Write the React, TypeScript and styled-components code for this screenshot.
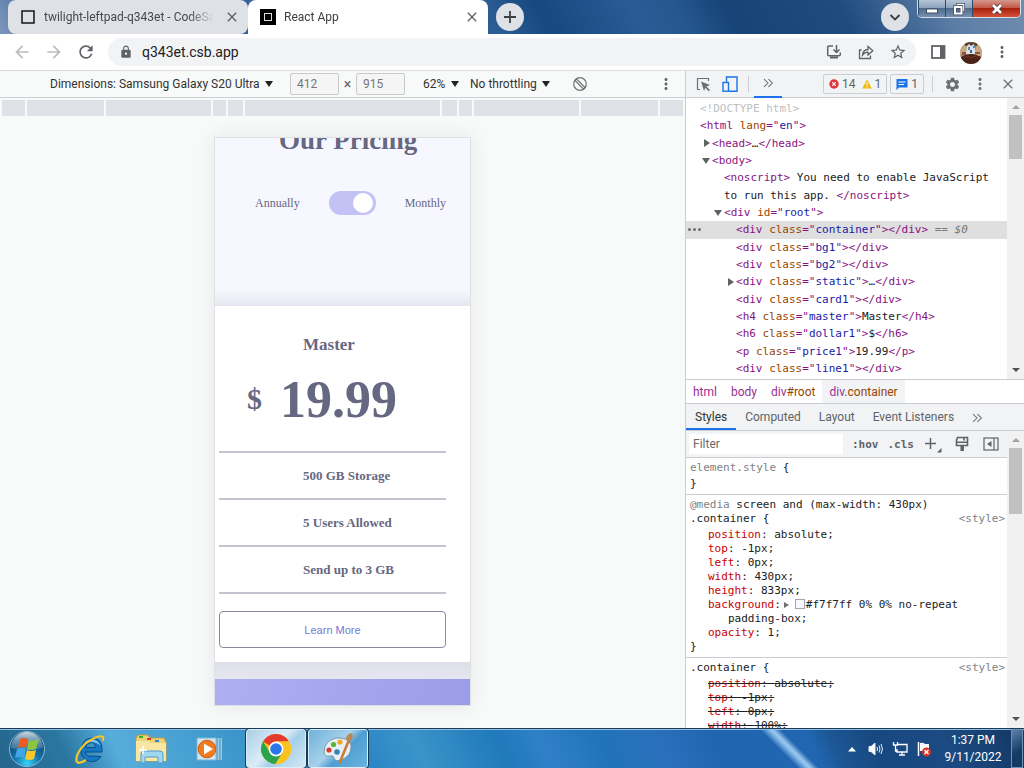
import React from "react";
import styled, { createGlobalStyle, css } from "styled-components";
import {
  MdArrowBack,
  MdArrowForward,
  MdClose,
  MdLock,
  MdMoreVert,
  MdRefresh,
  MdSettings,
  MdStarBorder,
} from "react-icons/md";

const ui = `Roboto, "Open Sans", sans-serif`;
const mono = `"DejaVu Sans Mono", "Liberation Mono", monospace`;
const serif = `"Liberation Serif", "Times New Roman", serif`;

const GlobalStyle = createGlobalStyle`
  *, *::before, *::after { box-sizing: border-box; }
  body { margin: 0; font-family: ${ui}; font-size: 12px; color: #333; }
  button, input, select { font: inherit; color: inherit; margin: 0; }
  button { padding: 0; border: 0; background: none; }
  h1, h2, ul, p { margin: 0; padding: 0; }
  ul { list-style: none; }
  a { color: inherit; text-decoration: none; }
`;

const Desktop = styled.div`
  display: flex;
  flex-direction: column;
  height: 100vh;
  overflow: hidden;
`;

/* ---------- Browser frame ---------- */

const TitleBar = styled.header`
  display: flex;
  flex: none;
  height: 34px;
  padding: 0 3px 0 8px;
  background: linear-gradient(
    62deg,
    #7d97bb 0%,
    #3b699f 6%,
    #2b5c94 48%,
    #184880 53%,
    #2b5b94 62%,
    #265890 66%,
    #174377 71%,
    #1f4b7f 82%,
    #5b7da6 92%,
    #6f8dae 100%
  );
`;

const Tab = styled.div<{ $active?: boolean }>`
  display: flex;
  align-items: center;
  gap: 8px;
  flex: 0 1 240px;
  min-width: 0;
  padding: 0 6px 0 12px;
  border-radius: ${(p) => (p.$active ? "8px 8px 0 0" : "8px")};
  background: ${(p) => (p.$active ? "#fff" : "#dee1e6")};
  color: ${(p) => (p.$active ? "#3c4043" : "#45494d")};
`;

const TabTitle = styled.span`
  flex: 1;
  overflow: hidden;
  white-space: nowrap;
  mask-image: linear-gradient(90deg, #000 85%, transparent);
`;

const RoundButton = styled.button<{ $push?: boolean }>`
  display: grid;
  place-items: center;
  flex: none;
  width: 28px;
  height: 28px;
  margin: 3px 0 0 ${(p) => (p.$push ? "auto" : "8px")};
  border-radius: 50%;
  background: #dee1e6;
  color: #3c4043;
`;

const WindowControls = styled.div`
  display: flex;
  flex: none;
  height: 18px;
  margin-left: 8px;
  border: 1px solid #d5dfeb;
  border-top: 0;
  border-radius: 0 0 5px 5px;
  overflow: hidden;
`;

const WindowButton = styled.button<{ $close?: boolean }>`
  display: grid;
  place-items: center;
  width: ${(p) => (p.$close ? "48px" : "27px")};
  border-left: 1px solid #2f4969;
  background: ${(p) =>
    p.$close
      ? "linear-gradient(#d5988c 0%, #c45a48 45%, #a9220c 50%, #d4513a 100%)"
      : "linear-gradient(#b6c5d6 0%, #8da4bf 45%, #4e6b8f 50%, #7791b0 100%)"};
`;

const NavBar = styled.nav`
  display: flex;
  align-items: center;
  flex: none;
  height: 37px;
  padding: 0 12px;
  gap: 12px;
  border-bottom: 1px solid #d9dbde;
  background: #fff;
`;

const IconButton = styled.button<{ $muted?: boolean }>`
  display: grid;
  place-items: center;
  flex: none;
  width: 20px;
  height: 20px;
  color: ${(p) => (p.$muted ? "#babcbe" : "#5f6368")};
`;

const AddressBar = styled.div`
  display: flex;
  align-items: center;
  flex: 1;
  height: 28px;
  gap: 12px;
  padding: 0 8px 0 11px;
  border-radius: 14px;
  background: #f1f3f4;
  color: #5f6368;
`;

const AddressInput = styled.input`
  flex: 1;
  min-width: 0;
  margin-left: -3px;
  padding: 0;
  border: 0;
  outline: 0;
  background: none;
  font-size: 14px;
  color: #202124;
`;

const Content = styled.main`
  display: flex;
  flex: 1;
  min-height: 0;
`;

/* ---------- Device preview ---------- */

const Preview = styled.section`
  display: flex;
  flex-direction: column;
  flex: 1;
  min-width: 0;
  background: #f8f9f9;
`;

const DeviceBar = styled.div`
  display: flex;
  align-items: center;
  flex: none;
  height: 27px;
  padding: 0 9px 0 50px;
  border-bottom: 1px solid #cacdd1;
`;

const ViewOptions = styled.div`
  display: flex;
  align-items: center;
  margin: 0 auto 0 18px;
`;

const DropDown = styled.label<{ $gap: number }>`
  display: flex;
  align-items: center;
  gap: 5px;
  margin-right: ${(p) => p.$gap}px;
  &::after {
    content: "";
    border: 4px solid transparent;
    border-top: 6px solid #222;
    border-bottom: 0;
  }
`;

const Select = styled.select`
  appearance: none;
  padding: 0;
  border: 0;
  background: none;
  outline: 0;
`;

const SizeInput = styled.input`
  width: 49px;
  height: 22px;
  padding: 0 6px;
  border: 1px solid #c8cacc;
  border-radius: 2px;
  background: #f5f5f5;
  color: #757575;
`;

const Times = styled.span`
  width: 17px;
  font-size: 14px;
  text-align: center;
  color: #666;
`;

const Spacer = styled.span`
  flex: 1;
`;

const Ruler = styled.div`
  display: grid;
  grid-template-columns: 23fr 77fr 105fr 13fr 15fr 195fr 15fr 13fr 105fr 77fr 23fr;
  gap: 2px;
  flex: none;
  height: 16px;
  margin: 2px;
`;

const RulerStep = styled.i`
  background: #dee1e6;
`;

const Stage = styled.div`
  flex: 1;
  display: flex;
  justify-content: center;
  align-items: flex-start;
  padding-top: 19px;
  overflow: hidden;
`;

const Phone = styled.article`
  display: flex;
  flex-direction: column;
  width: 257px;
  border: 1px solid #dfe0e4;
  box-shadow: 0 0 20px rgba(0, 0, 0, 0.08);
  overflow: hidden;
  font-family: ${serif};
  color: #666780;
`;

const Hero = styled.div`
  height: 168px;
  background: linear-gradient(#f7f7ff 90%, #e6e6f0);
`;

const PageTitle = styled.h1`
  display: flex;
  align-items: flex-end;
  height: 18px;
  padding-left: 64px;
  font-size: 27px;
  line-height: 32px;
  white-space: nowrap;
`;

const Billing = styled.label`
  display: flex;
  align-items: center;
  justify-content: space-between;
  margin-top: 35px;
  padding: 0 24px 0 40px;
`;

const Switch = styled.input`
  appearance: none;
  width: 47px;
  height: 24px;
  padding: 2px;
  border-radius: 12px;
  background: #c2c2f4;
  &::before {
    content: "";
    display: block;
    width: 20px;
    height: 20px;
    margin-left: 22px;
    border-radius: 50%;
    background: #fff;
  }
`;

const PlanCard = styled.section`
  height: 356px;
  padding: 27px 24px 0 4px;
  background: #fff;
`;

const PlanName = styled.h2`
  padding-left: 84px;
  font-size: 17px;
  line-height: 24px;
`;

const Price = styled.p`
  display: flex;
  align-items: center;
  gap: 18px;
  height: 94px;
  padding: 0 0 10px 28px;
  font-size: 52px;
  font-weight: bold;
`;

const Currency = styled.span`
  font-size: 30px;
`;

const Features = styled.ul`
  border-top: 2px solid #c4c4ce;
`;

const Feature = styled.li`
  height: 47px;
  padding-left: 84px;
  border-bottom: 2px solid #c4c4ce;
  font-size: 13px;
  font-weight: bold;
  line-height: 46px;
`;

const LearnMore = styled.button`
  width: 100%;
  height: 37px;
  margin-top: 17px;
  border: 1px solid #8a8a9e;
  border-radius: 4px;
  font-family: "Liberation Sans", Arial, sans-serif;
  font-size: 11px;
  color: #7577d8;
`;

const CardShade = styled.div`
  height: 17px;
  background: linear-gradient(#dfdfe9, #e6e6f1);
`;

const NextCard = styled.div`
  height: 26px;
  background: linear-gradient(100deg, #aeaff2, #9a9ce8);
`;

/* ---------- Developer tools ---------- */

const DevTools = styled.aside`
  display: flex;
  flex-direction: column;
  flex: none;
  width: 339px;
  border-left: 1px solid #cacdd1;
  background: #fff;
`;

const ToolBar = styled.div`
  display: flex;
  align-items: center;
  flex: none;
  height: 27px;
  padding: 0 3px;
  border-bottom: 1px solid #cacdd1;
  background: #f1f3f4;
`;

const ToolButton = styled.button<{ $wide?: boolean; $active?: boolean }>`
  display: grid;
  place-items: center;
  width: ${(p) => (p.$wide ? "28px" : "27px")};
  height: 27px;
  color: #6e7073;
  ${(p) =>
    p.$active &&
    css`
      border-bottom: 2px solid #1a73e8;
    `}
`;

const Divider = styled.i`
  width: 1px;
  height: 16px;
  margin: 0 5px;
  background: #cacdd1;
`;

const Counter = styled.button`
  display: flex;
  align-items: center;
  gap: 3px;
  height: 20px;
  margin-right: 3px;
  padding: 0 5px;
  border: 1px solid #cacdd1;
  border-radius: 2px;
  color: #5f6368;
`;

const Pane = styled.div<{ $grow?: boolean }>`
  display: flex;
  flex: ${(p) => (p.$grow ? "1 1 0" : "0 0 281px")};
  min-height: 0;
`;

const PaneBody = styled.div`
  flex: 1;
  min-width: 0;
  overflow: hidden;
  font-family: ${mono};
  font-size: 11px;
  color: #202124;
`;

const Tree = styled.ul`
  display: grid;
  grid-template-rows: repeat(16, 1fr);
  height: 100%;
  padding: 2px 0;
`;

const TreeRow = styled.li<{ $depth: number; $selected?: boolean }>`
  display: flex;
  align-items: center;
  padding-left: ${(p) => 2 + p.$depth * 12}px;
  background: ${(p) => (p.$selected ? "#dfdfdf" : "none")};
  white-space: pre;
`;

const Twisty = styled.span<{ $state?: "open" | "closed" }>`
  display: flex;
  justify-content: flex-end;
  width: 12px;
  padding-right: 2px;
  &::before {
    content: "";
    border: 4px solid transparent;
    ${(p) => p.$state === "open" && "border-top: 6px solid #5f6368; border-bottom: 0;"}
    ${(p) =>
      p.$state === "closed" && "border-left: 6px solid #5f6368; border-right: 0;"}
  }
`;

const RowDots = styled.span`
  display: flex;
  gap: 2px;
  width: 48px;
`;

const RowDot = styled.i`
  width: 3px;
  height: 3px;
  border-radius: 50%;
  background: #6e6e6e;
`;

const TagText = styled.span`
  color: #881280;
`;
const AttrName = styled.span`
  color: #994500;
`;
const AttrValue = styled.span`
  color: #1a1aa6;
`;
const Faded = styled.span`
  color: #c0c0c0;
`;
const Marker = styled.em`
  color: #777;
`;

const ScrollTrack = styled.div`
  display: flex;
  flex-direction: column;
  align-items: center;
  flex: none;
  width: 17px;
  padding: 7px 0;
  background: #f1f1f1;
  &::before {
    content: "";
    margin-bottom: 6px;
    border: 4px solid transparent;
    border-bottom: 4px solid #a3a3a3;
    border-top: 0;
  }
  &::after {
    content: "";
    margin-top: auto;
    border: 4px solid transparent;
    border-top: 4px solid #505050;
    border-bottom: 0;
  }
`;

const ScrollThumb = styled.i<{ $height: number }>`
  width: 13px;
  height: ${(p) => p.$height}px;
  background: #c1c1c1;
`;

const Crumbs = styled.nav`
  display: flex;
  flex: none;
  height: 24px;
  border-top: 1px solid #cacdd1;
`;

const Crumb = styled.a<{ $selected?: boolean }>`
  padding: 0 7px;
  line-height: 24px;
  color: ${(p) => (p.$selected ? "#994500" : "#9a2f93")};
  background: ${(p) => (p.$selected ? "#f1f3f4" : "none")};
`;

const CrumbTag = styled.span`
  color: #9a2f93;
`;

const CrumbName = styled.span`
  color: #994500;
`;

const SubTabs = styled.div`
  display: flex;
  flex: none;
  height: 28px;
  border-top: 1px solid #cacdd1;
  border-bottom: 1px solid #cacdd1;
  background: #f1f3f4;
`;

const SubTab = styled.button<{ $active?: boolean }>`
  padding: 2px 9px 0;
  border-bottom: 2px solid ${(p) => (p.$active ? "#1a73e8" : "transparent")};
  color: ${(p) => (p.$active ? "#333" : "#5f6368")};
`;

const FilterBar = styled.div`
  display: flex;
  align-items: center;
  height: 27px;
  padding: 0 6px 0 3px;
  gap: 9px;
  border-bottom: 1px solid #cacdd1;
  background: #f1f3f4;
`;

const FilterInput = styled.input`
  flex: 1;
  min-width: 0;
  height: 20px;
  padding: 0 4px;
  border: 0;
  background: #fff;
  font-family: ${ui};
  font-size: 12px;
  &::placeholder {
    color: #6b6b6b;
    opacity: 1;
  }
`;

const FilterToggle = styled.button`
  font-weight: bold;
  color: #5f6368;
`;

const Rule = styled.section`
  padding: 3px 2px 3px 4px;
  border-bottom: 1px solid #cacdd1;
  line-height: 14px;
  white-space: pre;
`;

const Selector = styled.div`
  display: flex;
  justify-content: space-between;
  margin-bottom: 2px;
`;

const Muted = styled.span`
  color: #808285;
`;

const Declaration = styled.div<{ $off?: boolean }>`
  padding-left: 18px;
  text-decoration: ${(p) => (p.$off ? "line-through" : "none")};
`;

const Continuation = styled.div`
  padding-left: 20px;
`;

const Property = styled.span`
  color: #c80000;
`;

const Expand = styled.i`
  display: inline-block;
  margin: 0 6px 0 3px;
  border: 3px solid transparent;
  border-left: 5px solid #6e6e6e;
  border-right: 0;
`;

const Swatch = styled.i`
  display: inline-block;
  width: 10px;
  height: 10px;
  margin-right: 1px;
  border: 1px solid #a5a5ad;
  background: #f7f7ff;
  vertical-align: -1px;
`;

/* ---------- Taskbar ---------- */

const TaskBar = styled.footer`
  display: flex;
  align-items: center;
  flex: none;
  height: 40px;
  padding: 0 1px 0 5px;
  border-top: 1px solid #1d3b57;
  box-shadow: inset 0 1px 0 #8fc1e4;
  color: #fff;
  background: linear-gradient(
    65deg,
    #24658c 0%,
    #2b77a2 7%,
    #56addb 12%,
    #3a94c9 25%,
    #2d87c6 36%,
    #3a94c9 41%,
    #2079ba 49%,
    #2f80c8 53%,
    #2173b9 59%,
    #2a70bc 64%,
    #2065b0 70%,
    #2166b0 79%,
    #1c5795 81%,
    #184880 85%,
    #1c4a82 92%,
    #123862 100%
  );
`;

const TaskButton = styled.button<{ $open?: "front" | "back"; $width?: number }>`
  display: grid;
  place-items: center;
  flex: none;
  width: ${(p) => p.$width ?? 60}px;
  height: 39px;
  ${(p) =>
    p.$open &&
    css`
      margin-right: 2px;
      border: 1px solid #dceefa;
      border-radius: 3px;
      outline: 1px solid #173a56;
      background: ${p.$open === "front"
        ? "linear-gradient(135deg, #a9cfe6, #dcecf6 45%, #a5cfe8 60%, #d2e9f5)"
        : "linear-gradient(135deg, #6eb2db, #a7d0ea 45%, #4f9fd2 60%, #6bb3df)"};
    `}
`;

const Beam = styled.i`
  flex: none;
  align-self: stretch;
  width: 56px;
  margin: 0 26px 0 auto;
  background: linear-gradient(
    45deg,
    transparent 38%,
    #7fb5e8 47%,
    #9cc8f0 51%,
    transparent 60%
  );
`;

const Tray = styled.div`
  display: flex;
  align-items: center;
  gap: 8px;
`;

const Clock = styled.time`
  width: 68px;
  margin-left: 7px;
  text-align: center;
  line-height: 17px;
`;

const ShowDesktop = styled.button`
  align-self: stretch;
  width: 12px;
  margin-left: 4px;
  border: 1px solid #6c92b5;
  background: linear-gradient(150deg, #5d81a8, #143a66 60%);
`;

/* ---------- Drawings ---------- */

const SquareIcon = () => (
  <svg width="16" height="16" viewBox="0 0 16 16">
    <rect x="2" y="2" width="12" height="12" fill="none" stroke="#151515" strokeWidth="1.5" />
  </svg>
);

const DarkSquareIcon = () => (
  <svg width="16" height="16" viewBox="0 0 16 16">
    <rect width="16" height="16" />
    <rect x="4.5" y="4.5" width="7" height="7" fill="none" stroke="#ddd" />
  </svg>
);

const Line = (p: { size?: number; d: string; w?: number; color?: string }) => (
  <svg
    width={p.size ?? 16}
    height={p.size ?? 16}
    viewBox="0 0 16 16"
    fill="none"
    stroke={p.color ?? "currentColor"}
    strokeWidth={p.w ?? 1.5}
  >
    <path d={p.d} />
  </svg>
);

const InstallIcon = () => (
  <svg width="16" height="16" viewBox="0 0 16 16" fill="none" stroke="currentColor" strokeWidth="1.5">
    <path d="M7 2H3Q1.7 2 1.7 3.3V10.500Q1.700 11.800 3 11.800H13Q14.300 11.800 14.300 10.500V8.500" />
    <path d="M10.500 1V8M7.500 5.500L10.500 8.500L13.500 5.500" />
    <path d="M4 13.500H12" strokeWidth="2" />
  </svg>
);

const ShareIcon = () => (
  <Line w={1.3} d="M3.500 6H1.500V14.500H12.500V11.500M4.500 11Q5 5.800 10 5.500V2.500L14.800 6.800L10 11V8.200Q6.500 8.200 4.500 11Z" />
);

const SidePanelIcon = () => (
  <svg width="16" height="16" viewBox="0 0 16 16">
    <rect x="2" y="2" width="12.500" height="12" fill="none" stroke="#5f6368" strokeWidth="1.800" />
    <rect x="10" y="2" width="5" height="12" fill="#5f6368" />
  </svg>
);

const Avatar = () => (
  <svg width="22" height="22" viewBox="0 0 22 22">
    <clipPath id="avatar">
      <circle cx="11" cy="11" r="11" />
    </clipPath>
    <g clipPath="url(#avatar)">
      <rect width="22" height="22" fill="#a08467" />
      <path d="M0 4L7 2V13H0ZM16 3L22 5V14H15Z" fill="#c8a880" />
      <path d="M5 0H17V4H5Z" fill="#5a4434" />
      <path d="M7 4L9 2L11 4L14 2L16 12H6Z" fill="#d9e2e8" />
      <path d="M8 5H10V8H8ZM13 4H15V6H13Z" fill="#4e88ad" />
      <path d="M10 8H12V11H10Z" fill="#48618a" />
      <path d="M2 10H6V13H2ZM15 10H20V12H15Z" fill="#8e5140" />
      <path d="M1 15Q11 9 21 15L22 22H0Z" fill="#49231b" />
      <path d="M4 16L8 14L11 16L15 14L18 16" stroke="#7d3524" fill="none" />
    </g>
  </svg>
);

const RotateIcon = () => (
  <svg width="16" height="16" viewBox="0 0 16 16" fill="none" stroke="#6e7073" strokeWidth="1.200">
    <circle cx="8" cy="8" r="6.300" />
    <path d="M4.500 2.800L13 11.500L11.500 13.200L3 4.500Z" />
  </svg>
);

const InspectIcon = () => (
  <svg width="16" height="16" viewBox="0 0 16 16">
    <path d="M5 13.500H2.500V2.500H13.500V5" fill="none" stroke="#6e7073" strokeWidth="1.200" />
    <path d="M6 5.500L15 9L11.500 10.500L15 14L13.700 15.200L10.300 11.800L9 15Z" fill="#6e7073" />
  </svg>
);

const DevicesIcon = () => (
  <svg width="16" height="16" viewBox="0 0 16 16" fill="none" stroke="#1a73e8" strokeWidth="1.400">
    <path d="M4.500 6V1H15V15.200H7" />
    <rect x="1" y="6.500" width="5.500" height="8.700" />
  </svg>
);

const MoreTabs = () => (
  <Line
    w={1.2}
    d="M3.500 3.500L8 8L3.500 12.500M8.500 3.500L13 8L8.500 12.500"
    color="#6e7073"
    size={14}
  />
);

const ErrorIcon = () => (
  <svg width="10" height="10" viewBox="0 0 10 10">
    <circle cx="5" cy="5" r="4.700" fill="#e0343c" />
    <path d="M3.200 3.200L6.800 6.800M6.800 3.200L3.200 6.800" stroke="#fff" strokeWidth="1.200" />
  </svg>
);

const WarningIcon = () => (
  <svg width="10" height="10" viewBox="0 0 10 10">
    <path d="M5 .5L9.800 9.500H.2Z" fill="#f2b90f" />
    <path d="M5 3.500V6.500M5 7.300V8.500" stroke="#fff" strokeWidth="1.100" />
  </svg>
);

const MessageIcon = () => (
  <svg width="12" height="12" viewBox="0 0 12 12">
    <path d="M.5 1H11.500V9.500H3L.5 12Z" fill="#1a73e8" />
    <path d="M2.500 4H9.500M2.500 6.500H8" stroke="#fff" strokeWidth="1.100" />
  </svg>
);

const BrushIcon = () => (
  <svg width="16" height="16" viewBox="0 0 16 16" fill="none" stroke="#5f6368" strokeWidth="1.600">
    <path d="M3.500 1.500H13.500V9.500H2.500V4.500Z" />
    <path d="M2.500 6.200H14M10 1.500V4.500" />
    <path d="M8.200 10V15" strokeWidth="3.500" />
  </svg>
);

const SidebarIcon = () => (
  <svg width="16" height="16" viewBox="0 0 16 16" fill="none" stroke="#5f6368" strokeWidth="1.200">
    <rect x="1" y="2" width="14" height="12" />
    <path d="M11 2V14" />
    <path d="M8.500 5V11L4 8Z" fill="#5f6368" stroke="none" />
  </svg>
);

const AddRuleIcon = () => (
  <svg width="18" height="18" viewBox="0 0 18 18">
    <path d="M1 8.500H12M6.500 3V14" stroke="#5f6368" strokeWidth="1.500" />
    <path d="M17.500 13V17.500H13Z" fill="#5f6368" />
  </svg>
);

const StartOrb = () => (
  <svg width="38" height="38" viewBox="0 0 38 38">
    <defs>
      <radialGradient id="orb" cx="50%" cy="90%" r="80%">
        <stop offset="0" stopColor="#35d3f7" />
        <stop offset=".45" stopColor="#1474ab" />
        <stop offset="1" stopColor="#0e3c66" />
      </radialGradient>
      <linearGradient id="gloss" x1="0" y1="0" x2="0" y2="1">
        <stop offset="0" stopColor="#e8f4fa" stopOpacity=".85" />
        <stop offset="1" stopColor="#7fa8c4" stopOpacity=".3" />
      </linearGradient>
    </defs>
    <circle cx="19" cy="19" r="17.500" fill="url(#orb)" stroke="#8bbad6" />
    <path d="M3 18A16 16 0 0 1 35 18Q19 22 3 18Z" fill="url(#gloss)" />
    <path d="M12 9Q16 7 20 9L18 18Q14 16 10 18Z" fill="#ee5a24" />
    <path d="M21 10Q25 12 31 9L28 19Q23 21 19 19Z" fill="#8cc63f" />
    <path d="M9 19Q13 17 18 19L16 28Q11 26 7 28Z" fill="#41a5e6" />
    <path d="M19 20Q23 22 28 20L26 29Q21 31 17 29Z" fill="#fcc829" />
  </svg>
);

const ExplorerIcon = () => (
  <svg width="34" height="34" viewBox="0 0 34 34">
    <path
      d="M29 20H13Q14.500 25.500 21 24L29 24.500Q25 30.500 17.500 29.500Q8 27 9 17Q11 6.500 19.500 6Q30 6 30 17.500V20ZM13.500 15.500H23.500Q23 10.500 18.500 10.500Q14.500 11 13.500 15.500Z"
      fill="#1479c2"
      stroke="#0b4d88"
    />
    <path d="M11 14Q13 8 19.500 7.500Q27 8 28.500 14Q25 10 19 10Q14 10 11 14Z" fill="#83c6ef" />
    <path d="M14 28Q6 33 4.500 29Q3.500 21 14 11Q27 2 31 5Q32 6 30.500 9" fill="none" stroke="#f5c52c" strokeWidth="2.200" />
  </svg>
);

const FolderIcon = () => (
  <svg width="34" height="34" viewBox="0 0 34 34">
    <path d="M2 6L4 3H14L16 6H30L32 10V29H2Z" fill="#ecd27a" stroke="#c49a3b" />
    <path d="M5 4H9V6H5Z" fill="#2cb42c" />
    <path d="M13 6H17V8H13Z" fill="#d53a22" />
    <path d="M21 8H25V10H21Z" fill="#2a84d8" />
    <path d="M2 9H14L16 11H32V29H2Z" fill="#f8e7a3" />
    <path d="M7 31V22Q7 19 10 19H26Q29 19 29 22V31H24V25H11V31Z" fill="#9fd6f0" stroke="#4f9cc8" />
    <path d="M9 14V22M5 18H13" stroke="#fff" strokeWidth="1.500" />
  </svg>
);

const PlayerIcon = () => (
  <svg width="30" height="30" viewBox="0 0 30 30">
    <path d="M19 4H27V26H19Z" fill="#9ecae4" />
    <path d="M22 4V26M25 4V26" stroke="#4f8db3" />
    <path d="M2 4H21V26H2Z" fill="#cfe6f3" stroke="#7eb4d3" />
    <circle cx="12" cy="15" r="8.800" fill="#f27b1d" stroke="#d45c0b" />
    <path d="M9 9.500L18 15L9 20.500Z" fill="#fff" />
  </svg>
);

const ChromeIcon = () => (
  <svg width="32" height="32" viewBox="0 0 32 32">
    <circle cx="16" cy="16" r="15" fill="#fcc31e" />
    <path d="M16 16L3 8.500A15 15 0 0 1 29 8.500H16Z" fill="#e33b2e" />
    <path d="M3 8.500A15 15 0 0 0 15.500 31L22.500 19.500L10 19.500Z" fill="#2ba24c" />
    <path d="M16 8.500H29A15 15 0 0 1 15.500 31L22.500 19.700Z" fill="#fcc31e" />
    <circle cx="16" cy="16" r="7.400" fill="#fff" />
    <circle cx="16" cy="16" r="5.800" fill="#2a76e8" />
  </svg>
);

const PaintIcon = () => (
  <svg width="34" height="34" viewBox="0 0 34 34">
    <path
      d="M3 20Q3 9 15 6Q27 5 30 13Q31 24 20 28Q14 30 13 26Q13 23 9 24Q3 25 3 20Z"
      fill="#e4eff6"
      stroke="#7898ae"
    />
    <circle cx="8" cy="18" r="2.600" fill="#de3c30" />
    <circle cx="12.500" cy="12.500" r="2.600" fill="#58b430" />
    <circle cx="19" cy="10" r="2.600" fill="#f3a91c" />
    <circle cx="16" cy="20" r="2.800" fill="#3b82ad" />
    <path d="M28 8L18.500 31" stroke="#cf7a2a" strokeWidth="2.500" />
    <path d="M25 7Q25 2 31 1Q33 4 30 9Z" fill="#b98751" />
  </svg>
);

const TrayArrow = () => (
  <svg width="16" height="16" viewBox="0 0 16 16">
    <path d="M4 10.500L8 6L12 10.500Z" fill="#fff" />
  </svg>
);

const SpeakerIcon = () => (
  <svg width="16" height="16" viewBox="0 0 16 16" fill="none" stroke="#e6eef6">
    <path d="M1 5.500H3L7 2V14L3 10.500H1Z" fill="#fff" />
    <path d="M9 6Q10 8 9 10M11 4.500Q13 8 11 11.500M13 3Q16 8 13 13" />
  </svg>
);

const NetworkIcon = () => (
  <svg width="16" height="16" viewBox="0 0 16 16" fill="none" stroke="#fff" strokeWidth="1.300">
    <path d="M6 3.500H15V11H5V8" />
    <path d="M7 14H13M10 11V14" />
    <path d="M1.500 1V4H5.500V1M3.500 4V10H5" />
  </svg>
);

const FlagIcon = () => (
  <svg width="16" height="16" viewBox="0 0 16 16">
    <path d="M2.500 1V15" stroke="#fff" strokeWidth="1.500" />
    <path d="M4 2Q7 1 9 3H13V10H4Z" fill="#fff" />
    <circle cx="10.500" cy="11" r="4.500" fill="#d93025" />
    <path d="M8.500 9L12.500 13M12.500 9L8.500 13" stroke="#fff" strokeWidth="1.500" />
  </svg>
);

const MinimizeIcon = () => (
  <svg width="14" height="14" viewBox="0 0 14 14">
    <rect x="1.500" y="7" width="11" height="4" fill="#fff" stroke="#454f60" />
  </svg>
);

const RestoreIcon = () => (
  <svg width="14" height="14" viewBox="0 0 14 14" fill="none">
    <path d="M5.500 4V2.500H11.500V8.500H10" stroke="#454f60" strokeWidth="3" />
    <path d="M5.500 4V2.500H11.500V8.500H10" stroke="#fff" strokeWidth="1.500" />
    <rect x="3" y="5" width="6.500" height="6.500" stroke="#454f60" strokeWidth="3.500" />
    <rect x="3" y="5" width="6.500" height="6.500" stroke="#fff" strokeWidth="2" />
  </svg>
);

const CloseWindowIcon = () => (
  <svg width="14" height="14" viewBox="0 0 14 14" fill="none">
    <path d="M3 3L11 11M11 3L3 11" stroke="#4c3138" strokeWidth="4.500" />
    <path d="M3 3L11 11M11 3L3 11" stroke="#fff" strokeWidth="2.800" />
  </svg>
);

/* ---------- Sections ---------- */

type NodeProps = {
  tag: string;
  attr?: string;
  value?: string;
  text?: string;
  open?: boolean;
};

const Node = ({ tag, attr, value, text, open }: NodeProps) => (
  <span>
    <TagText>&lt;{tag}</TagText>
    {attr && (
      <>
        {" "}
        <AttrName>{attr}</AttrName>
        <TagText>="</TagText>
        <AttrValue>{value}</AttrValue>
        <TagText>"</TagText>
      </>
    )}
    <TagText>&gt;</TagText>
    {text}
    {!open && <TagText>&lt;/{tag}&gt;</TagText>}
  </span>
);

const leafNodes: (NodeProps & { twisty?: "closed" })[] = [
  { tag: "div", attr: "class", value: "bg1" },
  { tag: "div", attr: "class", value: "bg2" },
  { tag: "div", attr: "class", value: "static", text: "…", twisty: "closed" },
  { tag: "div", attr: "class", value: "card1" },
  { tag: "h4", attr: "class", value: "master", text: "Master" },
  { tag: "h6", attr: "class", value: "dollar1", text: "$" },
  { tag: "p", attr: "class", value: "price1", text: "19.99" },
  { tag: "div", attr: "class", value: "line1" },
];

const Elements = () => (
  <Pane>
    <PaneBody>
      <Tree>
        <TreeRow $depth={0}>
          <Twisty />
          <Faded>&lt;!DOCTYPE html&gt;</Faded>
        </TreeRow>
        <TreeRow $depth={0}>
          <Twisty />
          <Node tag="html" attr="lang" value="en" open />
        </TreeRow>
        <TreeRow $depth={1}>
          <Twisty $state="closed" />
          <Node tag="head" text="…" />
        </TreeRow>
        <TreeRow $depth={1}>
          <Twisty $state="open" />
          <Node tag="body" open />
        </TreeRow>
        <TreeRow $depth={2}>
          <Twisty />
          <TagText>&lt;noscript&gt;</TagText> You need to enable JavaScript
        </TreeRow>
        <TreeRow $depth={2}>
          <Twisty />
          to run this app. <TagText>&lt;/noscript&gt;</TagText>
        </TreeRow>
        <TreeRow $depth={2}>
          <Twisty $state="open" />
          <Node tag="div" attr="id" value="root" open />
        </TreeRow>
        <TreeRow $depth={0} $selected>
          <RowDots>
            <RowDot />
            <RowDot />
            <RowDot />
          </RowDots>
          <Node tag="div" attr="class" value="container" />
          <Marker> == $0</Marker>
        </TreeRow>
        {leafNodes.map(({ twisty, ...node }) => (
          <TreeRow $depth={3} key={node.value}>
            <Twisty $state={twisty} />
            <Node {...node} />
          </TreeRow>
        ))}
      </Tree>
    </PaneBody>
    <ScrollTrack>
      <ScrollThumb $height={44} />
    </ScrollTrack>
  </Pane>
);

const Decl = ({ name, value, off }: { name: string; value: string; off?: boolean }) => (
  <Declaration $off={off}>
    <Property>{name}</Property>: {value};
  </Declaration>
);

const Styles = () => (
  <Pane $grow>
    <PaneBody>
      <FilterBar>
        <FilterInput aria-label="Filter" placeholder="Filter" />
        <FilterToggle>:hov</FilterToggle>
        <FilterToggle>.cls</FilterToggle>
        <IconButton aria-label="New style rule">
          <AddRuleIcon />
        </IconButton>
        <IconButton aria-label="Rendering">
          <BrushIcon />
        </IconButton>
        <IconButton aria-label="Computed sidebar">
          <SidebarIcon />
        </IconButton>
      </FilterBar>
      <Rule>
        <Selector>
          <span>
            <Muted>element.style</Muted> {"{"}
          </span>
        </Selector>
        {"}"}
      </Rule>
      <Rule>
        <div>
          <Muted>@media</Muted> screen and (max-width: 430px)
        </div>
        <Selector>
          <span>.container {"{"}</span>
          <Muted>&lt;style&gt;</Muted>
        </Selector>
        <Decl name="position" value="absolute" />
        <Decl name="top" value="-1px" />
        <Decl name="left" value="0px" />
        <Decl name="width" value="430px" />
        <Decl name="height" value="833px" />
        <Declaration>
          <Property>background</Property>:<Expand />
          <Swatch />
          #f7f7ff 0% 0% no-repeat
          <Continuation>padding-box;</Continuation>
        </Declaration>
        <Decl name="opacity" value="1" />
        {"}"}
      </Rule>
      <Rule>
        <Selector>
          <span>.container {"{"}</span>
          <Muted>&lt;style&gt;</Muted>
        </Selector>
        <Decl off name="position" value="absolute" />
        <Decl off name="top" value="-1px" />
        <Decl off name="left" value="0px" />
        <Decl off name="width" value="100%" />
      </Rule>
    </PaneBody>
    <ScrollTrack>
      <ScrollThumb $height={66} />
    </ScrollTrack>
  </Pane>
);

const PricingPage = () => (
  <Phone>
    <Hero>
      <PageTitle>Our Pricing</PageTitle>
      <Billing>
        <span>Annually</span>
        <Switch type="checkbox" role="switch" defaultChecked />
        <span>Monthly</span>
      </Billing>
    </Hero>
    <PlanCard>
      <PlanName>Master</PlanName>
      <Price>
        <Currency>$</Currency>
        19.99
      </Price>
      <Features>
        <Feature>500 GB Storage</Feature>
        <Feature>5 Users Allowed</Feature>
        <Feature>Send up to 3 GB</Feature>
      </Features>
      <LearnMore>Learn More</LearnMore>
    </PlanCard>
    <CardShade />
    <NextCard />
  </Phone>
);

export default function App() {
  return (
    <Desktop>
      <GlobalStyle />
      <TitleBar>
        <Tab>
          <SquareIcon />
          <TabTitle>twilight-leftpad-q343et - CodeSandbox</TabTitle>
          <IconButton aria-label="Close tab">
            <MdClose size={16} />
          </IconButton>
        </Tab>
        <Tab $active>
          <DarkSquareIcon />
          <TabTitle>React App</TabTitle>
          <IconButton aria-label="Close tab">
            <MdClose size={16} />
          </IconButton>
        </Tab>
        <RoundButton aria-label="New tab">
          <Line d="M8 2V14M2 8H14" w={1.8} />
        </RoundButton>
        <RoundButton $push aria-label="Search tabs">
          <Line d="M3.500 6L8 10.500L12.500 6" w={1.8} />
        </RoundButton>
        <WindowControls>
          <WindowButton aria-label="Minimize">
            <MinimizeIcon />
          </WindowButton>
          <WindowButton aria-label="Restore">
            <RestoreIcon />
          </WindowButton>
          <WindowButton $close aria-label="Close">
            <CloseWindowIcon />
          </WindowButton>
        </WindowControls>
      </TitleBar>

      <NavBar>
        <IconButton $muted aria-label="Back">
          <MdArrowBack size={20} />
        </IconButton>
        <IconButton $muted aria-label="Forward">
          <MdArrowForward size={20} />
        </IconButton>
        <IconButton aria-label="Reload">
          <MdRefresh size={20} />
        </IconButton>
        <AddressBar>
          <MdLock size={14} />
          <AddressInput aria-label="Address" defaultValue="q343et.csb.app" />
          <IconButton aria-label="Install">
            <InstallIcon />
          </IconButton>
          <IconButton aria-label="Share">
            <ShareIcon />
          </IconButton>
          <IconButton aria-label="Bookmark">
            <MdStarBorder size={18} />
          </IconButton>
        </AddressBar>
        <IconButton aria-label="Side panel">
          <SidePanelIcon />
        </IconButton>
        <IconButton aria-label="Profile">
          <Avatar />
        </IconButton>
        <IconButton aria-label="Menu">
          <MdMoreVert size={18} />
        </IconButton>
      </NavBar>

      <Content>
        <Preview>
          <DeviceBar>
            <DropDown $gap={17}>
              <Select aria-label="Device">
                <option>Dimensions: Samsung Galaxy S20 Ultra</option>
              </Select>
            </DropDown>
            <SizeInput aria-label="Width" defaultValue="412" />
            <Times>×</Times>
            <SizeInput aria-label="Height" defaultValue="915" />
            <ViewOptions>
              <DropDown $gap={11}>
                <Select aria-label="Zoom">
                  <option>62%</option>
                </Select>
              </DropDown>
              <DropDown $gap={20}>
                <Select aria-label="Throttling">
                  <option>No throttling</option>
                </Select>
              </DropDown>
              <IconButton aria-label="Rotate">
                <RotateIcon />
              </IconButton>
            </ViewOptions>
            <IconButton aria-label="More options">
              <MdMoreVert size={18} />
            </IconButton>
          </DeviceBar>
          <Ruler>
            {Array.from({ length: 11 }, (_, i) => (
              <RulerStep key={i} />
            ))}
          </Ruler>
          <Stage>
            <PricingPage />
          </Stage>
        </Preview>

        <DevTools>
          <ToolBar>
            <ToolButton aria-label="Inspect">
              <InspectIcon />
            </ToolButton>
            <ToolButton aria-label="Toggle device toolbar">
              <DevicesIcon />
            </ToolButton>
            <Divider />
            <ToolButton $wide $active aria-label="More tabs">
              <MoreTabs />
            </ToolButton>
            <Spacer />
            <Counter>
              <ErrorIcon />
              14
              <Spacer />
              <WarningIcon />1
            </Counter>
            <Counter>
              <MessageIcon />1
            </Counter>
            <Divider />
            <ToolButton $wide aria-label="Settings">
              <MdSettings size={17} />
            </ToolButton>
            <ToolButton $wide aria-label="Customize">
              <MdMoreVert size={18} />
            </ToolButton>
            <ToolButton aria-label="Close developer tools">
              <MdClose size={16} />
            </ToolButton>
          </ToolBar>
          <Elements />
          <Crumbs aria-label="Node path">
            <Crumb href="#html">html</Crumb>
            <Crumb href="#body">body</Crumb>
            <Crumb href="#root">
              <CrumbTag>div</CrumbTag>
              <CrumbName>#root</CrumbName>
            </Crumb>
            <Crumb href="#container" $selected>
              <CrumbTag>div</CrumbTag>.container
            </Crumb>
          </Crumbs>
          <SubTabs>
            <SubTab $active>Styles</SubTab>
            <SubTab>Computed</SubTab>
            <SubTab>Layout</SubTab>
            <SubTab>Event Listeners</SubTab>
            <ToolButton aria-label="More panes">
              <MoreTabs />
            </ToolButton>
          </SubTabs>
          <Styles />
        </DevTools>
      </Content>

      <TaskBar>
        <TaskButton $width={44} aria-label="Start">
          <StartOrb />
        </TaskButton>
        <TaskButton $width={80} aria-label="Internet Explorer">
          <ExplorerIcon />
        </TaskButton>
        <TaskButton $width={44} aria-label="File Explorer">
          <FolderIcon />
        </TaskButton>
        <TaskButton $width={73} aria-label="Media Player">
          <PlayerIcon />
        </TaskButton>
        <TaskButton $open="front" aria-label="Chrome">
          <ChromeIcon />
        </TaskButton>
        <TaskButton $open="back" aria-label="Paint">
          <PaintIcon />
        </TaskButton>
        <Beam />
        <Tray>
          <TrayArrow />
          <SpeakerIcon />
          <NetworkIcon />
          <FlagIcon />
        </Tray>
        <Clock>
          1:37 PM
          <br />
          9/11/2022
        </Clock>
        <ShowDesktop aria-label="Show desktop" />
      </TaskBar>
    </Desktop>
  );
}
